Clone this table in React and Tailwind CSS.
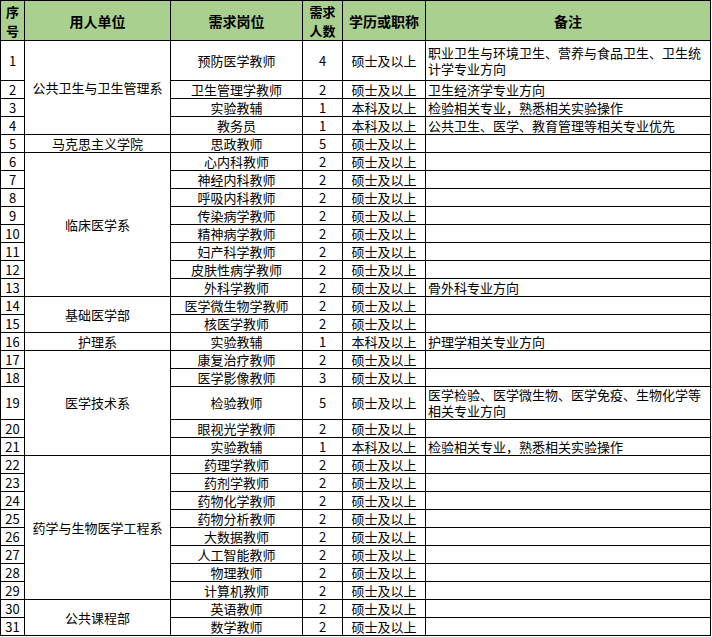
import React from 'react';

const rows = [
  { n: 1, unit: '公共卫生与卫生管理系', span: 4, job: '预防医学教师', num: 4, edu: '硕士及以上', note: '职业卫生与环境卫生、营养与食品卫生、卫生统计学专业方向', tall: 'h-[40px]' },
  { n: 2, job: '卫生管理学教师', num: 2, edu: '硕士及以上', note: '卫生经济学专业方向' },
  { n: 3, job: '实验教辅', num: 1, edu: '本科及以上', note: '检验相关专业，熟悉相关实验操作' },
  { n: 4, job: '教务员', num: 1, edu: '本科及以上', note: '公共卫生、医学、教育管理等相关专业优先' },
  { n: 5, unit: '马克思主义学院', span: 1, job: '思政教师', num: 5, edu: '硕士及以上', note: '' },
  { n: 6, unit: '临床医学系', span: 8, job: '心内科教师', num: 2, edu: '硕士及以上', note: '' },
  { n: 7, job: '神经内科教师', num: 2, edu: '硕士及以上', note: '' },
  { n: 8, job: '呼吸内科教师', num: 2, edu: '硕士及以上', note: '' },
  { n: 9, job: '传染病学教师', num: 2, edu: '硕士及以上', note: '' },
  { n: 10, job: '精神病学教师', num: 2, edu: '硕士及以上', note: '' },
  { n: 11, job: '妇产科学教师', num: 2, edu: '硕士及以上', note: '' },
  { n: 12, job: '皮肤性病学教师', num: 2, edu: '硕士及以上', note: '' },
  { n: 13, job: '外科学教师', num: 2, edu: '硕士及以上', note: '骨外科专业方向' },
  { n: 14, unit: '基础医学部', span: 2, job: '医学微生物学教师', num: 2, edu: '硕士及以上', note: '' },
  { n: 15, job: '核医学教师', num: 2, edu: '硕士及以上', note: '' },
  { n: 16, unit: '护理系', span: 1, job: '实验教辅', num: 1, edu: '本科及以上', note: '护理学相关专业方向' },
  { n: 17, unit: '医学技术系', span: 5, job: '康复治疗教师', num: 2, edu: '硕士及以上', note: '' },
  { n: 18, job: '医学影像教师', num: 3, edu: '硕士及以上', note: '' },
  { n: 19, job: '检验教师', num: 5, edu: '硕士及以上', note: '医学检验、医学微生物、医学免疫、生物化学等相关专业方向', tall: 'h-[32px]' },
  { n: 20, job: '眼视光学教师', num: 2, edu: '硕士及以上', note: '' },
  { n: 21, job: '实验教辅', num: 1, edu: '本科及以上', note: '检验相关专业，熟悉相关实验操作' },
  { n: 22, unit: '药学与生物医学工程系', span: 8, job: '药理学教师', num: 2, edu: '硕士及以上', note: '' },
  { n: 23, job: '药剂学教师', num: 2, edu: '硕士及以上', note: '' },
  { n: 24, job: '药物化学教师', num: 2, edu: '硕士及以上', note: '' },
  { n: 25, job: '药物分析教师', num: 2, edu: '硕士及以上', note: '' },
  { n: 26, job: '大数据教师', num: 2, edu: '硕士及以上', note: '' },
  { n: 27, job: '人工智能教师', num: 2, edu: '硕士及以上', note: '' },
  { n: 28, job: '物理教师', num: 2, edu: '硕士及以上', note: '' },
  { n: 29, job: '计算机教师', num: 2, edu: '硕士及以上', note: '' },
  { n: 30, unit: '公共课程部', span: 2, job: '英语教师', num: 2, edu: '硕士及以上', note: '' },
  { n: 31, job: '数学教师', num: 2, edu: '硕士及以上', note: '' },
];

const cell = 'border border-black p-0 text-center align-middle';

export default function App() {
  return (
    <div className="bg-white w-[712px] h-[637px] overflow-hidden text-black font-['Noto_Sans_CJK_SC','Noto_Sans',sans-serif]">
      <table className="w-[711px] table-fixed border-collapse text-[13px] leading-[16px]">
        <colgroup>
          <col className="w-[24px]" />
          <col className="w-[146px]" />
          <col className="w-[132px]" />
          <col className="w-[40px]" />
          <col className="w-[83px]" />
          <col />
        </colgroup>
        <thead>
          <tr className="h-[40px] bg-[#a9d08e] font-bold text-[14px]">
            <th className={cell + ' text-[13px] leading-[19px]'}>序<br />号</th>
            <th className={cell}>用人单位</th>
            <th className={cell}>需求岗位</th>
            <th className={cell + ' text-[13px] leading-[19px]'}>需求<br />人数</th>
            <th className={cell}>学历或职称</th>
            <th className={cell}>备注</th>
          </tr>
        </thead>
        <tbody>
          {rows.map((r) => (
            <tr key={r.n} className={r.tall || 'h-[18px]'}>
              <td className={cell}>{r.n}</td>
              {r.unit && (
                <td rowSpan={r.span} className={cell}>{r.unit}</td>
              )}
              <td className={cell}>{r.job}</td>
              <td className={cell}>{r.num}</td>
              <td className={cell}>{r.edu}</td>
              <td className="border border-black py-0 pl-[2px] pr-[4px] text-left align-middle">{r.note}</td>
            </tr>
          ))}
        </tbody>
      </table>
    </div>
  );
}
